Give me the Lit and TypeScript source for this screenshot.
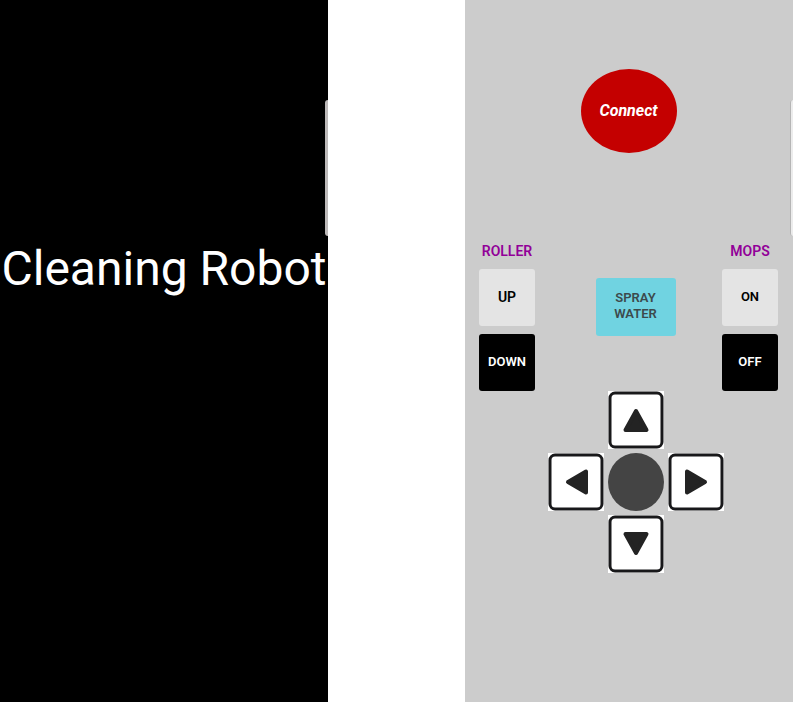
import { LitElement, html, css } from "lit";
import { customElement } from "lit/decorators.js";

const arrows = [
  { name: "up", label: "Forward", points: "28,20 38.5,39 17.5,39" },
  { name: "left", label: "Left", points: "20,29 38,18.5 38,39.5" },
  { name: "right", label: "Right", points: "37,29 19,18.5 19,39.5" },
  { name: "down", label: "Backward", points: "28,38 38.5,19 17.5,19" },
];

@customElement("app-root")
export class AppRoot extends LitElement {
  static styles = css`
    :host {
      display: grid;
      grid-template-columns: minmax(0, 1fr) 137px minmax(0, 1fr);
      min-height: 100vh;
      background: #fff;
      font-family: Roboto, "Liberation Sans", sans-serif;
    }
    * {
      box-sizing: border-box;
    }
    button {
      font: inherit;
      border: 0;
      padding: 0;
      cursor: pointer;
    }
    .screen {
      position: relative;
      overflow: hidden;
    }
    .splash {
      background: #000;
      color: #fff;
      padding-top: 239px;
    }
    h1 {
      margin: 0;
      font-size: 48px;
      line-height: 60px;
      font-weight: 400;
      text-align: center;
      white-space: nowrap;
    }
    .handle {
      position: absolute;
      top: 100px;
      right: 0;
      width: 3px;
      height: 136px;
      border-radius: 4px 0 0 4px;
      background: #bdb9b9;
    }
    .remote .handle {
      background: #ececec;
      border-left: 1px solid #b5b5b5;
    }
    .remote {
      grid-column: 3;
      background: #ccc;
      padding: 69px 15px 0 14px;
    }
    .connect {
      display: block;
      margin: 0 auto;
      width: 96px;
      height: 84px;
      border-radius: 50%;
      background: #c40000;
      color: #fff;
      font-size: 16px;
      font-weight: 700;
      font-style: italic;
      padding-bottom: 2px;
    }
    .controls {
      display: flex;
      justify-content: space-between;
      margin-top: 88px;
      font-weight: 600;
    }
    .group {
      display: flex;
      flex-direction: column;
      align-items: center;
      gap: 8px;
      width: 56px;
    }
    .label {
      margin: 0;
      font-size: 14px;
      line-height: 20px;
      font-weight: 600;
      color: #920098;
    }
    .key {
      width: 56px;
      height: 57px;
      border-radius: 3px;
      font-size: 13px;
      padding-bottom: 2px;
    }
    .large {
      font-size: 14px;
    }
    .light {
      background: #e4e4e4;
      color: #000;
    }
    .dark {
      background: #000;
      color: #fff;
    }
    .middle {
      padding: 37px 0 0 14px;
    }
    .spray {
      width: 80px;
      height: 58px;
      border-radius: 3px;
      background: #70d3e1;
      color: #3c4a4c;
      font-size: 13px;
      line-height: 16px;
      padding: 0 16px 2px;
    }
    .pad {
      display: grid;
      grid-template: "a up b" 58px "left stop right" 58px "c down d" 58px / 56px 56px 56px;
      gap: 4px;
      justify-content: center;
      padding-left: 14px;
    }
    .arrow {
      background: #fff;
    }
    .arrow svg {
      display: block;
    }
    .up {
      grid-area: up;
    }
    .left {
      grid-area: left;
    }
    .right {
      grid-area: right;
    }
    .down {
      grid-area: down;
    }
    .stop {
      grid-area: stop;
      border-radius: 50%;
      background: #444;
    }
  `;

  render() {
    return html`
      <section class="screen splash">
        <h1>Cleaning Robot</h1>
        <div class="handle"></div>
      </section>
      <main class="screen remote">
        <button class="connect">Connect</button>
        <div class="controls">
          <div class="group" role="group" aria-labelledby="roller">
            <h2 class="label" id="roller">ROLLER</h2>
            <button class="key light large">UP</button>
            <button class="key dark">DOWN</button>
          </div>
          <div class="middle">
            <button class="spray">SPRAY WATER</button>
          </div>
          <div class="group" role="group" aria-labelledby="mops">
            <h2 class="label" id="mops">MOPS</h2>
            <button class="key light">ON</button>
            <button class="key dark">OFF</button>
          </div>
        </div>
        <div class="pad">
          ${arrows.map(
            (a) => html`<button class="arrow ${a.name}" aria-label=${a.label}>
              <svg width="56" height="58" viewBox="0 0 56 58" aria-hidden="true">
                <rect x="2" y="2" width="52" height="54" rx="5" fill="#fff" stroke="#18181a" stroke-width="3" />
                <polygon points=${a.points} fill="#232323" stroke="#232323" stroke-width="4" stroke-linejoin="round" />
              </svg>
            </button>`,
          )}
          <button class="stop" aria-label="Stop"></button>
        </div>
        <div class="handle"></div>
      </main>
    `;
  }
}
